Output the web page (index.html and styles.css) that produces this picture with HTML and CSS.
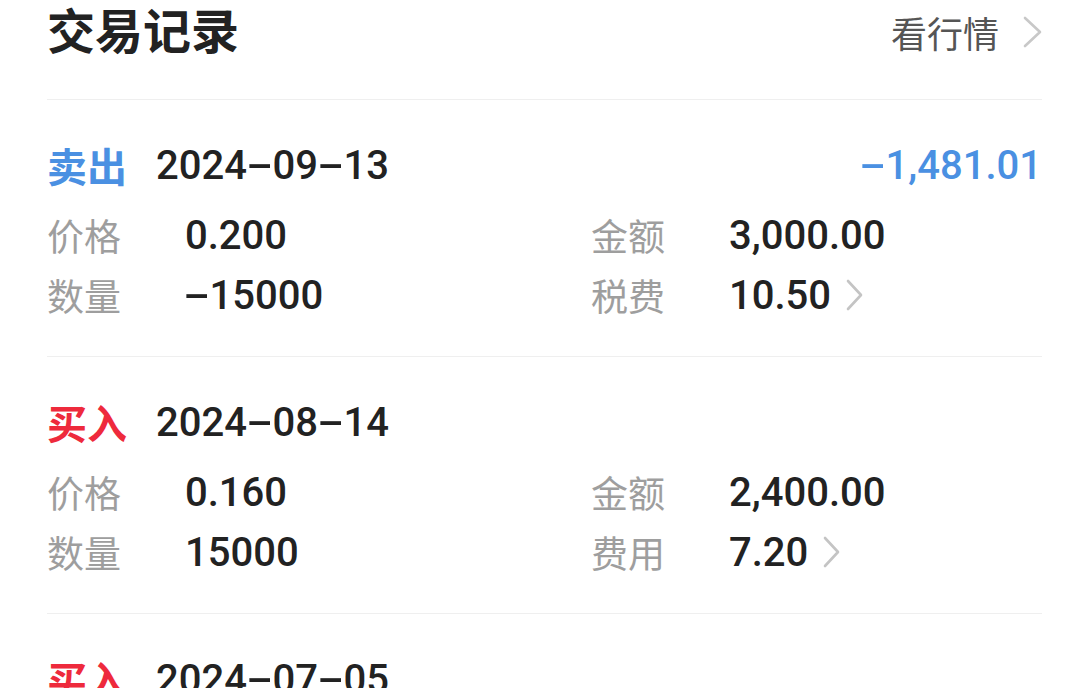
FILE: index.html
```html
<!DOCTYPE html>
<html lang="zh-CN">
<head>
  <meta charset="UTF-8">
  <meta name="viewport" content="width=device-width, initial-scale=1.0">
  <title>交易记录</title>
  <link rel="stylesheet" href="styles.css">
</head>
<body>
  <div class="page">
    <div class="header">
      <h1>交易记录</h1>
      <a class="more">看行情
        <svg class="arrow" width="19" height="32" viewBox="0 0 19 32"><polyline points="2,2 17,16 2,30" /></svg>
      </a>
    </div>

    <div class="record">
      <div class="record-head">
        <span class="type sell">卖出</span>
        <span class="date">2024<i class="dash">-</i>09<i class="dash">-</i>13</span>
        <span class="total"><i class="dash">-</i>1,481.01</span>
      </div>
      <div class="fields">
        <div class="field"><span class="key">价格</span><span class="val">0.200</span></div>
        <div class="field"><span class="key">金额</span><span class="val">3,000.00</span></div>
        <div class="field"><span class="key">数量</span><span class="val"><i class="dash">-</i>15000</span></div>
        <div class="field"><span class="key">税费</span><span class="val">10.50</span>
          <svg class="arrow small" width="17" height="32" viewBox="0 0 17 32"><polyline points="2,2 15,16 2,30" /></svg>
        </div>
      </div>
    </div>

    <div class="record">
      <div class="record-head">
        <span class="type buy">买入</span>
        <span class="date">2024<i class="dash">-</i>08<i class="dash">-</i>14</span>
      </div>
      <div class="fields">
        <div class="field"><span class="key">价格</span><span class="val">0.160</span></div>
        <div class="field"><span class="key">金额</span><span class="val">2,400.00</span></div>
        <div class="field"><span class="key">数量</span><span class="val">15000</span></div>
        <div class="field"><span class="key">费用</span><span class="val">7.20</span>
          <svg class="arrow small" width="17" height="32" viewBox="0 0 17 32"><polyline points="2,2 15,16 2,30" /></svg>
        </div>
      </div>
    </div>

    <div class="record">
      <div class="record-head">
        <span class="type buy">买入</span>
        <span class="date">2024<i class="dash">-</i>07<i class="dash">-</i>05</span>
      </div>
    </div>
  </div>
</body>
</html>
```

FILE: styles.css
```css
html, body {
  margin: 0;
  padding: 0;
  height: 100%;
  overflow: hidden;
}
body {
  font-family: Roboto, "Noto Sans CJK SC", sans-serif;
  background-color: #fff;
  color: #222;
}
.page {
  padding: 0 46px 0 47px;
}
.header {
  display: flex;
  align-items: center;
  justify-content: space-between;
  height: 66px;
  padding-bottom: 33px;
  border-bottom: 1px solid #efefef;
}
h1 {
  margin: 0;
  font-size: 48px;
  font-weight: 700;
  line-height: 66px;
  color: #222;
}
.more {
  display: flex;
  align-items: center;
  font-size: 36px;
  color: #555;
  margin-top: -2px;
}
.arrow {
  margin-left: 24px;
  fill: none;
  stroke: #c8c8c8;
  stroke-width: 2.6;
  stroke-linecap: round;
  stroke-linejoin: round;
}
.arrow.small {
  margin-left: 15px;
  stroke: #c4c4c4;
}
.record {
  padding: 40px 0 31px;
  border-bottom: 1px solid #efefef;
}
.record-head {
  display: flex;
  align-items: center;
  height: 50px;
}
.type {
  font-size: 40px;
  font-weight: 700;
  margin-right: 29px;
}
.sell {
  color: #4a90e2;
}
.buy {
  color: #ee2a3c;
}
.date {
  font-size: 40px;
  font-weight: 500;
  color: #222;
}
.total {
  margin-left: auto;
  font-size: 40px;
  font-weight: 500;
  color: #4a90e2;
}
.dash {
  display: inline-block;
  font-style: normal;
  margin: 0 6px;
  transform: scaleX(2);
}
.total .dash {
  margin: 0 6px 0 4px;
}
.val .dash {
  margin: 0 6px 0 5px;
}
.fields {
  display: grid;
  grid-template-columns: 544px 1fr;
  margin-top: 15px;
}
.field {
  display: flex;
  align-items: center;
  height: 60px;
}
.key {
  width: 138px;
  font-size: 37px;
  color: #9e9e9e;
}
.val {
  font-size: 40px;
  font-weight: 500;
  color: #222;
}
```
